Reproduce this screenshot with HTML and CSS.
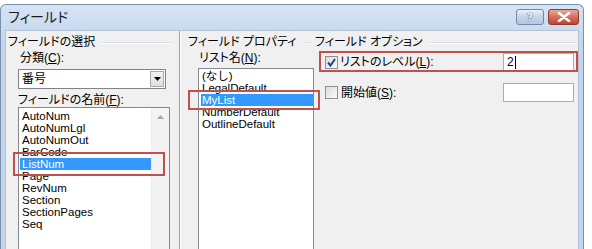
FILE: index.html
```html
<!DOCTYPE html>
<html lang="ja">
<head>
    <meta charset="UTF-8">
    <title>フィールド</title>
    <link rel="stylesheet" href="styles.css">
</head>
<body>
    <div class="window">
        <div class="titlebar">
            <span class="title">フィールド</span>
            <div class="caption-buttons">
                <span class="cap-btn help">?</span>
                <span class="cap-btn close">
                    <svg width="14" height="10" viewBox="0 0 14 10"><path d="M2 1 L12 9 M12 1 L2 9" stroke="#fff" stroke-width="2.6" stroke-linecap="round"/></svg>
                </span>
            </div>
        </div>

        <div class="dialog">
            <!-- フィールドの選択 -->
            <div class="group group-select">
                <div class="group-title">フィールドの選択</div>
                <div class="label label-cat">分類(<u>C</u>):</div>
                <div class="combo">
                    <span class="combo-text">番号</span>
                    <span class="combo-btn">
                        <svg width="7" height="4" viewBox="0 0 7 4"><path d="M0 0 H7 L3.5 4 Z" fill="#000"/></svg>
                    </span>
                </div>
                <div class="label label-name">フィールドの名前(<u>F</u>):</div>
                <div class="listbox field-list">
                    <div class="item">AutoNum</div>
                    <div class="item">AutoNumLgl</div>
                    <div class="item">AutoNumOut</div>
                    <div class="item">BarCode</div>
                    <div class="item selected">ListNum</div>
                    <div class="item">Page</div>
                    <div class="item">RevNum</div>
                    <div class="item">Section</div>
                    <div class="item">SectionPages</div>
                    <div class="item">Seq</div>
                    <div class="scrollbar">
                        <span class="scroll-up">
                            <svg width="7" height="4" viewBox="0 0 7 4"><path d="M0 4 H7 L3.5 0 Z" fill="#a8a8a8"/></svg>
                        </span>
                    </div>
                </div>
            </div>

            <div class="separator"></div>

            <!-- フィールド プロパティ -->
            <div class="group group-props">
                <div class="group-title">フィールド プロパティ</div>
                <div class="label label-list">リスト名(<u>N</u>):</div>
                <div class="listbox prop-list">
                    <div class="item">(なし)</div>
                    <div class="item">LegalDefault</div>
                    <div class="item selected">MyList</div>
                    <div class="item">NumberDefault</div>
                    <div class="item">OutlineDefault</div>
                </div>
            </div>

            <!-- フィールド オプション -->
            <div class="group group-options">
                <div class="group-title">フィールド オプション</div>
                <div class="option-row row-level">
                    <span class="checkbox checked">
                        <svg width="9" height="9" viewBox="0 0 9 9"><path d="M1 4.5 L3.5 7.5 L8 1" fill="none" stroke="#23408e" stroke-width="2"/></svg>
                    </span>
                    <span class="option-label">リストのレベル(<u>L</u>):</span>
                    <span class="textbox">2<span class="caret"></span></span>
                </div>
                <div class="option-row row-start">
                    <span class="checkbox"></span>
                    <span class="option-label">開始値(<u>S</u>):</span>
                    <span class="textbox tall"></span>
                </div>
            </div>

            <!-- 注釈の赤枠 -->
            <div class="mark mark-listnum"></div>
            <div class="mark mark-mylist"></div>
            <div class="mark mark-level"></div>
        </div>
    </div>
</body>
</html>
```

FILE: styles.css
```css
html, body {
    margin: 0;
    padding: 0;
    background: #fff;
    overflow: hidden;
}
body {
    font-family: "Liberation Sans", "Noto Sans CJK JP", sans-serif;
    font-size: 12px;
    color: #000;
    font-feature-settings: "palt";
}
u {
    text-decoration: underline;
    text-underline-offset: 1px;
}
.window {
    margin-top: 4px;
    width: 584px;
    height: 245px;
    box-sizing: border-box;
    border: 1px solid #7a8fab;
    border-bottom: none;
    border-radius: 6px 6px 0 0;
    padding: 0 4px;
    background: linear-gradient(#d6e4f4, #c3d6ed 40px, #c3d6ed);
}
.titlebar {
    height: 25px;
    display: flex;
    align-items: flex-start;
}
.title {
    font-size: 14px;
    line-height: 25px;
    padding-left: 3px;
    color: #1b1b1b;
}
.caption-buttons {
    margin-left: auto;
    margin-top: 4px;
    display: flex;
    gap: 4px;
}
.cap-btn {
    height: 16px;
    box-sizing: border-box;
    border-radius: 3px;
    display: flex;
    align-items: center;
    justify-content: center;
}
.help {
    width: 28px;
    border: 1px solid #7189a8;
    background: linear-gradient(#e9f0f8, #c4d4e8 50%, #b3c8e1);
    color: #f4f7fb;
    font-family: "DejaVu Sans", sans-serif;
    font-weight: bold;
    font-size: 11px;
    text-shadow: 0 0 1px #3c4d66, 0 0 1px #3c4d66;
}
.close {
    width: 31px;
    border: 1px solid #8e3b2f;
    background: linear-gradient(#e9a898, #d6705b 50%, #c2432f);
}
.dialog {
    position: relative;
    height: 220px;
    border: 1px solid #b4c4d8;
    border-bottom: none;
    background: #f0f0f0;
    display: flex;
    align-items: stretch;
    padding-top: 5px;
    box-sizing: border-box;
}
.group-title {
    height: 13px;
    line-height: 13px;
    display: flex;
    align-items: center;
    white-space: nowrap;
}
.group-title::after {
    content: "";
    flex: 1;
    height: 0;
    border-top: 1px solid #d5dfe5;
    border-bottom: 1px solid #fff;
    margin-left: 6px;
}
.label {
    height: 12px;
    line-height: 12px;
    white-space: nowrap;
}
.group-select {
    width: 173px;
    padding-left: 2px;
    box-sizing: border-box;
}
.group-select .group-title::after {
    margin-right: 7px;
}
.label-cat {
    margin-top: 3px;
    padding-left: 12px;
}
.combo {
    margin-top: 5px;
    margin-left: 10px;
    width: 148px;
    height: 20px;
    box-sizing: border-box;
    border: 1px solid #7f848c;
    background: #fff;
    display: flex;
    align-items: center;
}
.combo-text {
    padding-left: 3px;
    line-height: 16px;
}
.combo-btn {
    margin-left: auto;
    margin-right: 1px;
    width: 14px;
    height: 16px;
    box-sizing: border-box;
    border: 1px solid #a8a8a8;
    background: linear-gradient(#f2f2f2, #dedede);
    display: flex;
    align-items: center;
    justify-content: center;
}
.label-name {
    margin-top: 5px;
    padding-left: 10px;
}
.listbox {
    position: relative;
    box-sizing: border-box;
    border: 1px solid #828790;
    border-bottom: none;
    background: #fff;
    font-size: 11.5px;
    font-feature-settings: normal;
}
.item {
    height: 12px;
    line-height: 12px;
    white-space: nowrap;
}
.item.selected {
    background: #3399ff;
    color: #fff;
}
.field-list {
    margin-top: 1px;
    margin-left: 10px;
    width: 152px;
    height: 142px;
    padding: 2px 0 0 1px;
}
.field-list .item {
    width: 131px;
    padding-left: 2px;
    box-sizing: border-box;
}
.scrollbar {
    position: absolute;
    top: 0;
    right: 0;
    bottom: 0;
    width: 17px;
    background: #f3f3f3;
    border-left: 1px solid #ececec;
}
.scroll-up {
    height: 17px;
    display: flex;
    align-items: center;
    justify-content: center;
}
.separator {
    width: 0;
    border-left: 1px solid #a0a0a0;
    border-right: 1px solid #fff;
    margin-top: -5px;
}
.group-props {
    width: 129px;
    padding-left: 7px;
    box-sizing: border-box;
}
.label-list {
    margin-top: 3px;
    padding-left: 11px;
}
.prop-list {
    margin-top: 4px;
    margin-left: 10px;
    width: 116px;
    height: 181px;
    padding: 1px 0 0 2px;
}
.prop-list .item {
    padding-left: 1px;
}
.group-options {
    flex: 1;
    padding-left: 5px;
    padding-right: 2px;
}
.option-row {
    display: flex;
    align-items: center;
}
.row-level {
    margin-top: 4px;
    height: 18px;
}
.row-start {
    margin-top: 12px;
    height: 19px;
}
.checkbox {
    margin-left: 10px;
    width: 13px;
    height: 13px;
    box-sizing: border-box;
    border: 1px solid #8f8f8f;
    background: linear-gradient(135deg, #dcdcdc, #fbfbfb);
    display: flex;
    align-items: center;
    justify-content: center;
}
.option-label {
    margin-left: 2px;
    line-height: 12px;
}
.row-start .option-label {
    margin-left: 3px;
}
.textbox {
    margin-left: auto;
    margin-right: 2px;
    width: 71px;
    height: 18px;
    box-sizing: border-box;
    border: 1px solid #abadb3;
    background: #fff;
    display: flex;
    align-items: center;
    padding-left: 3px;
}
.textbox.tall {
    height: 19px;
}
.caret {
    width: 1px;
    height: 13px;
    background: #000;
    margin-left: 1px;
}
.mark {
    position: absolute;
    border: 2px solid #c0504d;
    box-sizing: border-box;
}
.mark-listnum {
    left: 7px;
    top: 121px;
    width: 152px;
    height: 24px;
}
.mark-mylist {
    left: 182px;
    top: 59px;
    width: 132px;
    height: 20px;
}
.mark-level {
    left: 313px;
    top: 20px;
    width: 259px;
    height: 21px;
}
```
